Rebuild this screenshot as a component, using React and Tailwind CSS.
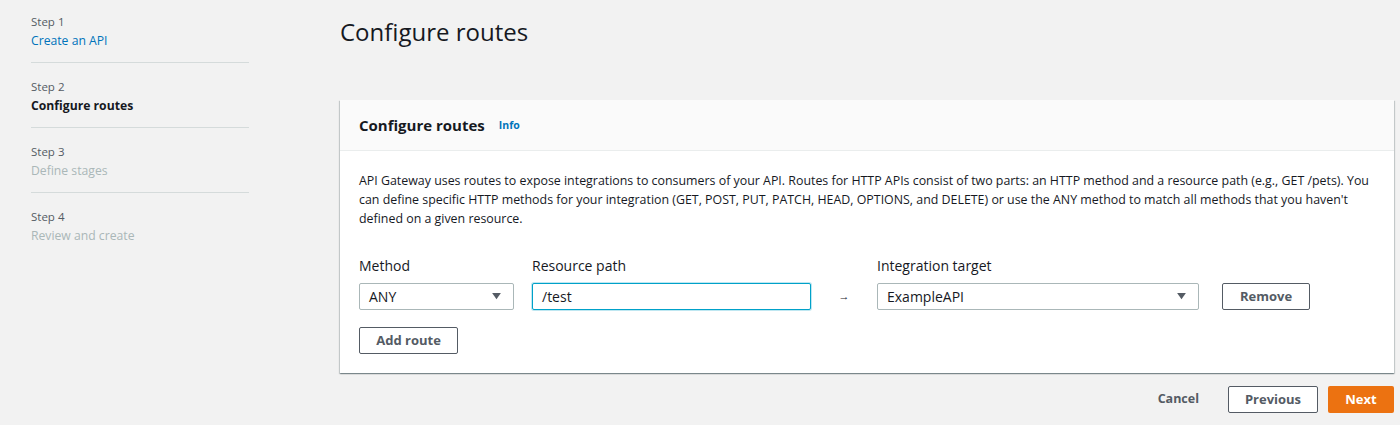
const steps = [
  { n: 1, title: 'Create an API', state: 'done' },
  { n: 2, title: 'Configure routes', state: 'current' },
  { n: 3, title: 'Define stages', state: 'todo' },
  { n: 4, title: 'Review and create', state: 'todo' },
]

function Caret() {
  return (
    <svg width="9" height="7" viewBox="0 0 10 8" className="shrink-0">
      <path d="M0 0 L10 0 L5 7 Z" fill="#545b64" />
    </svg>
  )
}

function Field({ label, children, className }) {
  return (
    <div className={className}>
      <div className="mb-[7px] text-[14px] leading-[20px] text-[#16191f]">{label}</div>
      {children}
    </div>
  )
}

export default function App() {
  return (
    <div className="flex min-h-[425px] w-[1400px] bg-[#f2f2f2] font-['Open_Sans',sans-serif] text-[#16191f]">
      {/* Wizard steps */}
      <nav className="w-[340px] shrink-0 pl-[31px] pt-[13px]">
        <ul className="w-[218px]">
          {steps.map((s, i) => (
            <li
              key={s.n}
              className={`pb-[11px] ${i === 0 ? '' : 'pt-[15px]'} ${i < steps.length - 1 ? 'border-b border-[#d5dbdb]' : ''}`}
            >
              <div className="text-[11.5px] leading-[18px] text-[#545b64]">Step {s.n}</div>
              <div
                className={`text-[12.2px] leading-[20px] ${
                  s.state === 'done'
                    ? 'text-[#0073bb]'
                    : s.state === 'current'
                    ? 'font-bold text-[#16191f]'
                    : 'text-[#aab7b8]'
                }`}
              >
                {s.title}
              </div>
            </li>
          ))}
        </ul>
      </nav>

      {/* Main */}
      <main className="flex-1 pr-[6px]">
        <h1 className="pt-[16px] text-[24px] leading-[32px] font-normal">Configure routes</h1>

        <section className="mt-[52px] bg-white shadow-[0_1px_1px_0_rgba(0,28,36,0.3),1px_1px_1px_0_rgba(0,28,36,0.15),-1px_1px_1px_0_rgba(0,28,36,0.15)]">
          <header className="flex h-[51px] items-center gap-[14px] border-b border-[#eaeded] bg-[#fafafa] px-[19px]">
            <h2 className="text-[15px] font-bold leading-[24px]">Configure routes</h2>
            <span className="pt-[2px] text-[10.5px] font-bold text-[#0073bb]">Info</span>
          </header>

          <div className="px-[19px] pb-[19px] pt-[20px]">
            <p className="text-[12.4px] leading-[19px] text-[#16191f]">
              API Gateway uses routes to expose integrations to consumers of your API. Routes for HTTP APIs consist of two parts: an HTTP method and a resource path (e.g., GET /pets). You can define specific HTTP methods for your integration (GET, POST, PUT, PATCH, HEAD, OPTIONS, and DELETE) or use the ANY method to match all methods that you haven't defined on a given resource.
            </p>

            <div className="mt-[28px] flex items-end">
              <Field label="Method" className="w-[155px]">
                <div className="flex h-[27px] items-center justify-between rounded-[2px] border border-[#aab7b8] bg-white pl-[9px] pr-[12px] text-[14px]">
                  <span>ANY</span>
                  <Caret />
                </div>
              </Field>
              <Field label="Resource path" className="ml-[18px] w-[279px]">
                <div className="flex h-[27px] items-center rounded-[2px] border border-[#00a1c9] bg-white pl-[9px] text-[14px] shadow-[0_0_0_1px_rgba(0,161,201,0.25)]">
                  /test
                </div>
              </Field>
              <div className="flex h-[27px] w-[66px] items-center justify-center text-[11px] text-[#16191f]">→</div>
              <Field label="Integration target" className="w-[322px]">
                <div className="flex h-[27px] items-center justify-between rounded-[2px] border border-[#aab7b8] bg-white pl-[9px] pr-[12px] text-[14px]">
                  <span>ExampleAPI</span>
                  <Caret />
                </div>
              </Field>
              <button className="ml-[23px] h-[27px] w-[88px] rounded-[2px] border border-[#545b64] bg-white text-[13px] font-bold text-[#545b64]">
                Remove
              </button>
            </div>

            <button className="mt-[17px] h-[27px] w-[99px] rounded-[2px] border border-[#545b64] bg-white text-[13px] font-bold text-[#545b64]">
              Add route
            </button>
          </div>
        </section>

        <div className="mt-[13px] flex items-center justify-end">
          <button className="mr-[29px] text-[12.5px] font-bold text-[#545b64]">Cancel</button>
          <button className="h-[27px] w-[90px] rounded-[2px] border border-[#545b64] bg-white text-[13px] font-bold text-[#545b64]">
            Previous
          </button>
          <button className="ml-[10px] h-[27px] w-[66px] rounded-[2px] bg-[#ec7211] text-[13px] font-bold text-white">
            Next
          </button>
        </div>
      </main>
    </div>
  )
}
